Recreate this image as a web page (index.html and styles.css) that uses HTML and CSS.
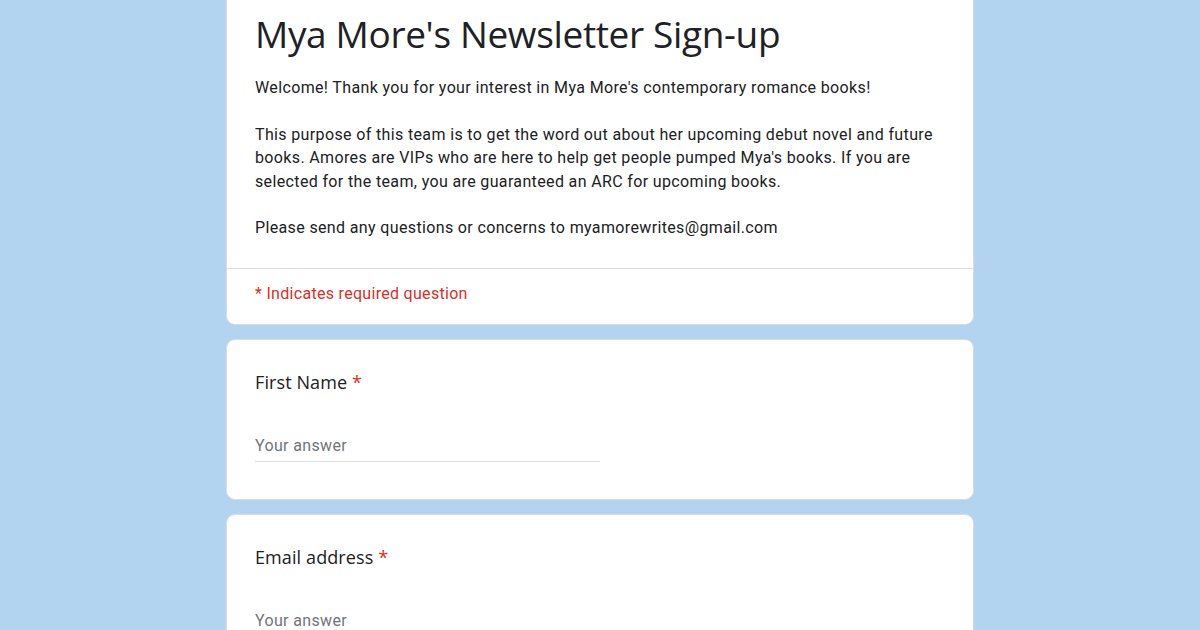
FILE: index.html
```html
<!doctype html>
<html>
<head>
	<meta charset="utf-8">
	<title>Mya More's Newsletter Sign-up</title>
	<link rel="stylesheet" href="styles.css">
</head>

<body>
	<div class="form">
		<div class="card header">
			<div class="intro">
				<h1 class="title">Mya More's Newsletter Sign-up</h1>
				<p class="desc">Welcome! Thank you for your interest in Mya More's contemporary romance books!</p>
				<p class="desc">This purpose of this team is to get the word out about her upcoming debut novel and future books. Amores are VIPs who are here to help get people pumped Mya's books. If you are selected for the team, you are guaranteed an ARC for upcoming books.</p>
				<p class="desc">Please send any questions or concerns to myamorewrites@gmail.com</p>
			</div>
			<div class="required">* Indicates required question</div>
		</div>

		<div class="card question">
			<div class="label">First Name <span class="star">*</span></div>
			<div class="answer">Your answer</div>
		</div>

		<div class="card question">
			<div class="label">Email address <span class="star">*</span></div>
			<div class="answer">Your answer</div>
		</div>
	</div>
</body>
</html>
```

FILE: styles.css
```css
html{
	background-color: #b3d4f0;
}
body,html{
	padding: 0;
	margin: 0;
	font-family: Roboto, "Liberation Sans", sans-serif;
	color: #202124;
}
.form{
	width: 748px;
	margin: 0 auto;
	display: flex;
	flex-direction: column;
	gap: 14px;
}
.card{
	background: #fff;
	border: 1px solid #dadce0;
	border-radius: 9px;
	box-sizing: border-box;
}
.header{
	border-top: none;
	border-radius: 0 0 9px 9px;
}
.intro{
	padding: 8px 28px 28px;
	border-bottom: 1px solid #dadce0;
}
.title{
	font-family: "Open Sans", sans-serif;
	font-weight: 400;
	font-size: 37px;
	line-height: 52px;
	margin: 0 0 16px;
	letter-spacing: -0.35px;
}
.desc{
	font-size: 16px;
	line-height: 23.4px;
	letter-spacing: .36px;
	margin: 0 0 23.4px;
}
.desc:last-child{
	margin-bottom: 0;
}
.required{
	color: #d93025;
	font-size: 16px;
	letter-spacing: .3px;
	padding: 15px 28px 21px;
}
.question{
	padding: 28px 28px 37px;
}
.label{
	font-family: "Open Sans", sans-serif;
	font-size: 18px;
	line-height: 28px;
	letter-spacing: .1px;
}
.star{
	color: #d93025;
}
.answer{
	width: 345px;
	margin-top: 40px;
	padding-bottom: 6px;
	border-bottom: 1px solid #e0e0e0;
	color: #70757a;
	font-size: 16px;
	letter-spacing: .35px;
}
```
